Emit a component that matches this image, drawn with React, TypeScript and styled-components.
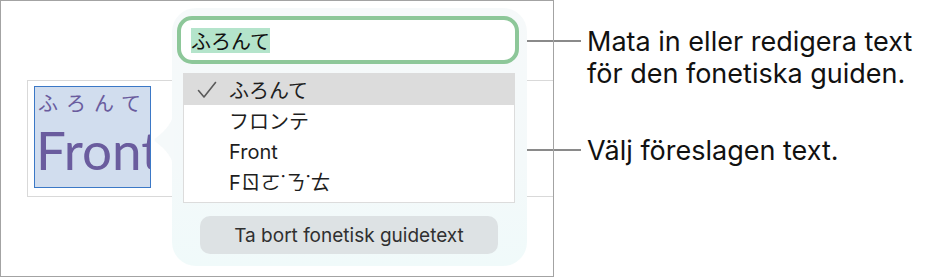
import React from "react";
import styled, { createGlobalStyle } from "styled-components";

const GlobalStyle = createGlobalStyle`
  html, body {
    margin: 0;
    padding: 0;
    background: #ffffff;
  }
  body {
    font-family: "Inter", "Noto Sans CJK JP", sans-serif;
    color: #1a1a1a;
  }
`;

const Page = styled.div`
  display: flex;
  width: 937px;
  height: 278px;
  overflow: hidden;
`;

const Frame = styled.div`
  position: relative;
  box-sizing: border-box;
  width: 554px;
  height: 277px;
  border: 1px solid #a3a3a3;
  padding: 79px 0 0 26px;
  flex-shrink: 0;
`;

const DocBox = styled.div`
  box-sizing: border-box;
  height: 117px;
  border: 1px solid #d9d9d9;
  border-right: 0;
  padding: 5px 0 0 6px;
`;

const Selection = styled.div`
  box-sizing: border-box;
  width: 117px;
  height: 102px;
  background: #d1ddee;
  border: 1px solid #3b78c6;
  overflow: hidden;
  color: #6a5c9e;
  padding: 4px 0 0 3px;
`;

const Ruby = styled.div`
  font-family: "Noto Sans CJK JP", sans-serif;
  font-size: 20px;
  line-height: 24px;
  letter-spacing: 8px;
  white-space: nowrap;
`;

const BaseText = styled.div`
  font-family: "Lato", "Liberation Sans", sans-serif;
  font-size: 53px;
  line-height: 58px;
  margin-top: 6px;
  margin-left: -2px;
  white-space: nowrap;
`;

const Popover = styled.div`
  position: absolute;
  left: 171px;
  top: 7px;
  box-sizing: border-box;
  width: 355px;
  height: 258px;
  border-radius: 24px;
  background: linear-gradient(180deg, #f6f9fa 0%, #f4f9fa 60%, #f0fafa 100%);
  padding: 8px 0 0 5px;
  display: flex;
  flex-direction: column;
`;

const Arrow = styled.svg`
  position: absolute;
  left: -18px;
  top: 100px;
`;

const Field = styled.div`
  box-sizing: border-box;
  width: 342px;
  height: 48px;
  border: 4px solid #8dc799;
  border-radius: 15px;
  background: #ffffff;
  display: flex;
  align-items: center;
  padding-left: 10px;
`;

const FieldValue = styled.span`
  font-family: "Noto Sans CJK JP", sans-serif;
  font-size: 20px;
  line-height: 25px;
  background: #b4e4cb;
  color: #111;
`;

const List = styled.div`
  box-sizing: border-box;
  width: 332px;
  height: 130px;
  margin: 9px 0 0 6px;
  background: #ffffff;
  border: 1px solid #dcdcdc;
  display: flex;
  flex-direction: column;
`;

const Row = styled.div<{ $active?: boolean }>`
  display: flex;
  align-items: center;
  height: 31px;
  flex-shrink: 0;
  background: ${(p) => (p.$active ? "#dcdcdc" : "transparent")};
  font-size: 20px;
  line-height: 24px;
  color: #1e1e1e;
`;

const Check = styled.span`
  width: 45px;
  padding-left: 13px;
  box-sizing: border-box;
  display: flex;
  align-items: center;
`;

const RowLabel = styled.span<{ $cjk?: boolean }>`
  font-family: ${(p) =>
    p.$cjk
      ? `"Noto Sans CJK JP", sans-serif`
      : `"Inter", "Noto Sans CJK TC", sans-serif`};
  line-height: 24px;
  white-space: nowrap;
`;

const RemoveButton = styled.button`
  box-sizing: border-box;
  width: 298px;
  height: 38px;
  margin: 13px 0 0 23px;
  border: 0;
  border-radius: 10px;
  background: #dde2e4;
  color: #303030;
  font-family: "Inter", sans-serif;
  font-size: 19px;
  padding: 0;
`;

const Notes = styled.div`
  display: flex;
  flex-direction: column;
  padding-top: 26px;
`;

const Note = styled.div<{ $gap: number }>`
  display: flex;
  align-items: flex-start;
  margin-top: ${(p) => p.$gap}px;
`;

const Leader = styled.div<{ $reach: number }>`
  flex-shrink: 0;
  height: 2px;
  background: #8a8a8a;
  margin-left: -${(p) => p.$reach}px;
  width: ${(p) => p.$reach + 27}px;
  margin-top: 14px;
  margin-right: 6px;
`;

const NoteText = styled.div`
  font-family: "Inter", sans-serif;
  font-size: 27px;
  line-height: 32px;
  color: #111;
  white-space: nowrap;
`;

const Bopomofo = "F\u3116\u311B\u02D9\u310B\u02D9\u310A";

export default function App() {
  return (
    <>
      <GlobalStyle />
      <Page>
        <Frame>
          <DocBox>
            <Selection>
              <Ruby>ふろんて</Ruby>
              <BaseText>Front</BaseText>
            </Selection>
          </DocBox>
          <Popover>
            <Arrow width="20" height="64" viewBox="0 0 20 64">
              <path
                d="M20 0 C20 14 12 22 2 30 C0 31.5 0 32.5 2 34 C12 42 20 50 20 64 Z"
                fill="#f5f9fa"
              />
            </Arrow>
            <Field>
              <FieldValue>ふろんて</FieldValue>
            </Field>
            <List>
              <Row $active>
                <Check>
                  <svg width="20" height="18" viewBox="0 0 20 18">
                    <path
                      d="M1.5 9.5 L7 16 L18.5 1.5"
                      fill="none"
                      stroke="#5a5a5a"
                      strokeWidth="1.6"
                      strokeLinecap="round"
                      strokeLinejoin="round"
                    />
                  </svg>
                </Check>
                <RowLabel $cjk>ふろんて</RowLabel>
              </Row>
              <Row>
                <Check />
                <RowLabel $cjk>フロンテ</RowLabel>
              </Row>
              <Row>
                <Check />
                <RowLabel>Front</RowLabel>
              </Row>
              <Row>
                <Check />
                <RowLabel>{Bopomofo}</RowLabel>
              </Row>
            </List>
            <RemoveButton>Ta bort fonetisk guidetext</RemoveButton>
          </Popover>
        </Frame>
        <Notes>
          <Note $gap={0}>
            <Leader $reach={35} />
            <NoteText>
              Mata in eller redigera text
              <br />
              för den fonetiska guiden.
            </NoteText>
          </Note>
          <Note $gap={45}>
            <Leader $reach={40} />
            <NoteText>Välj föreslagen text.</NoteText>
          </Note>
        </Notes>
      </Page>
    </>
  );
}
